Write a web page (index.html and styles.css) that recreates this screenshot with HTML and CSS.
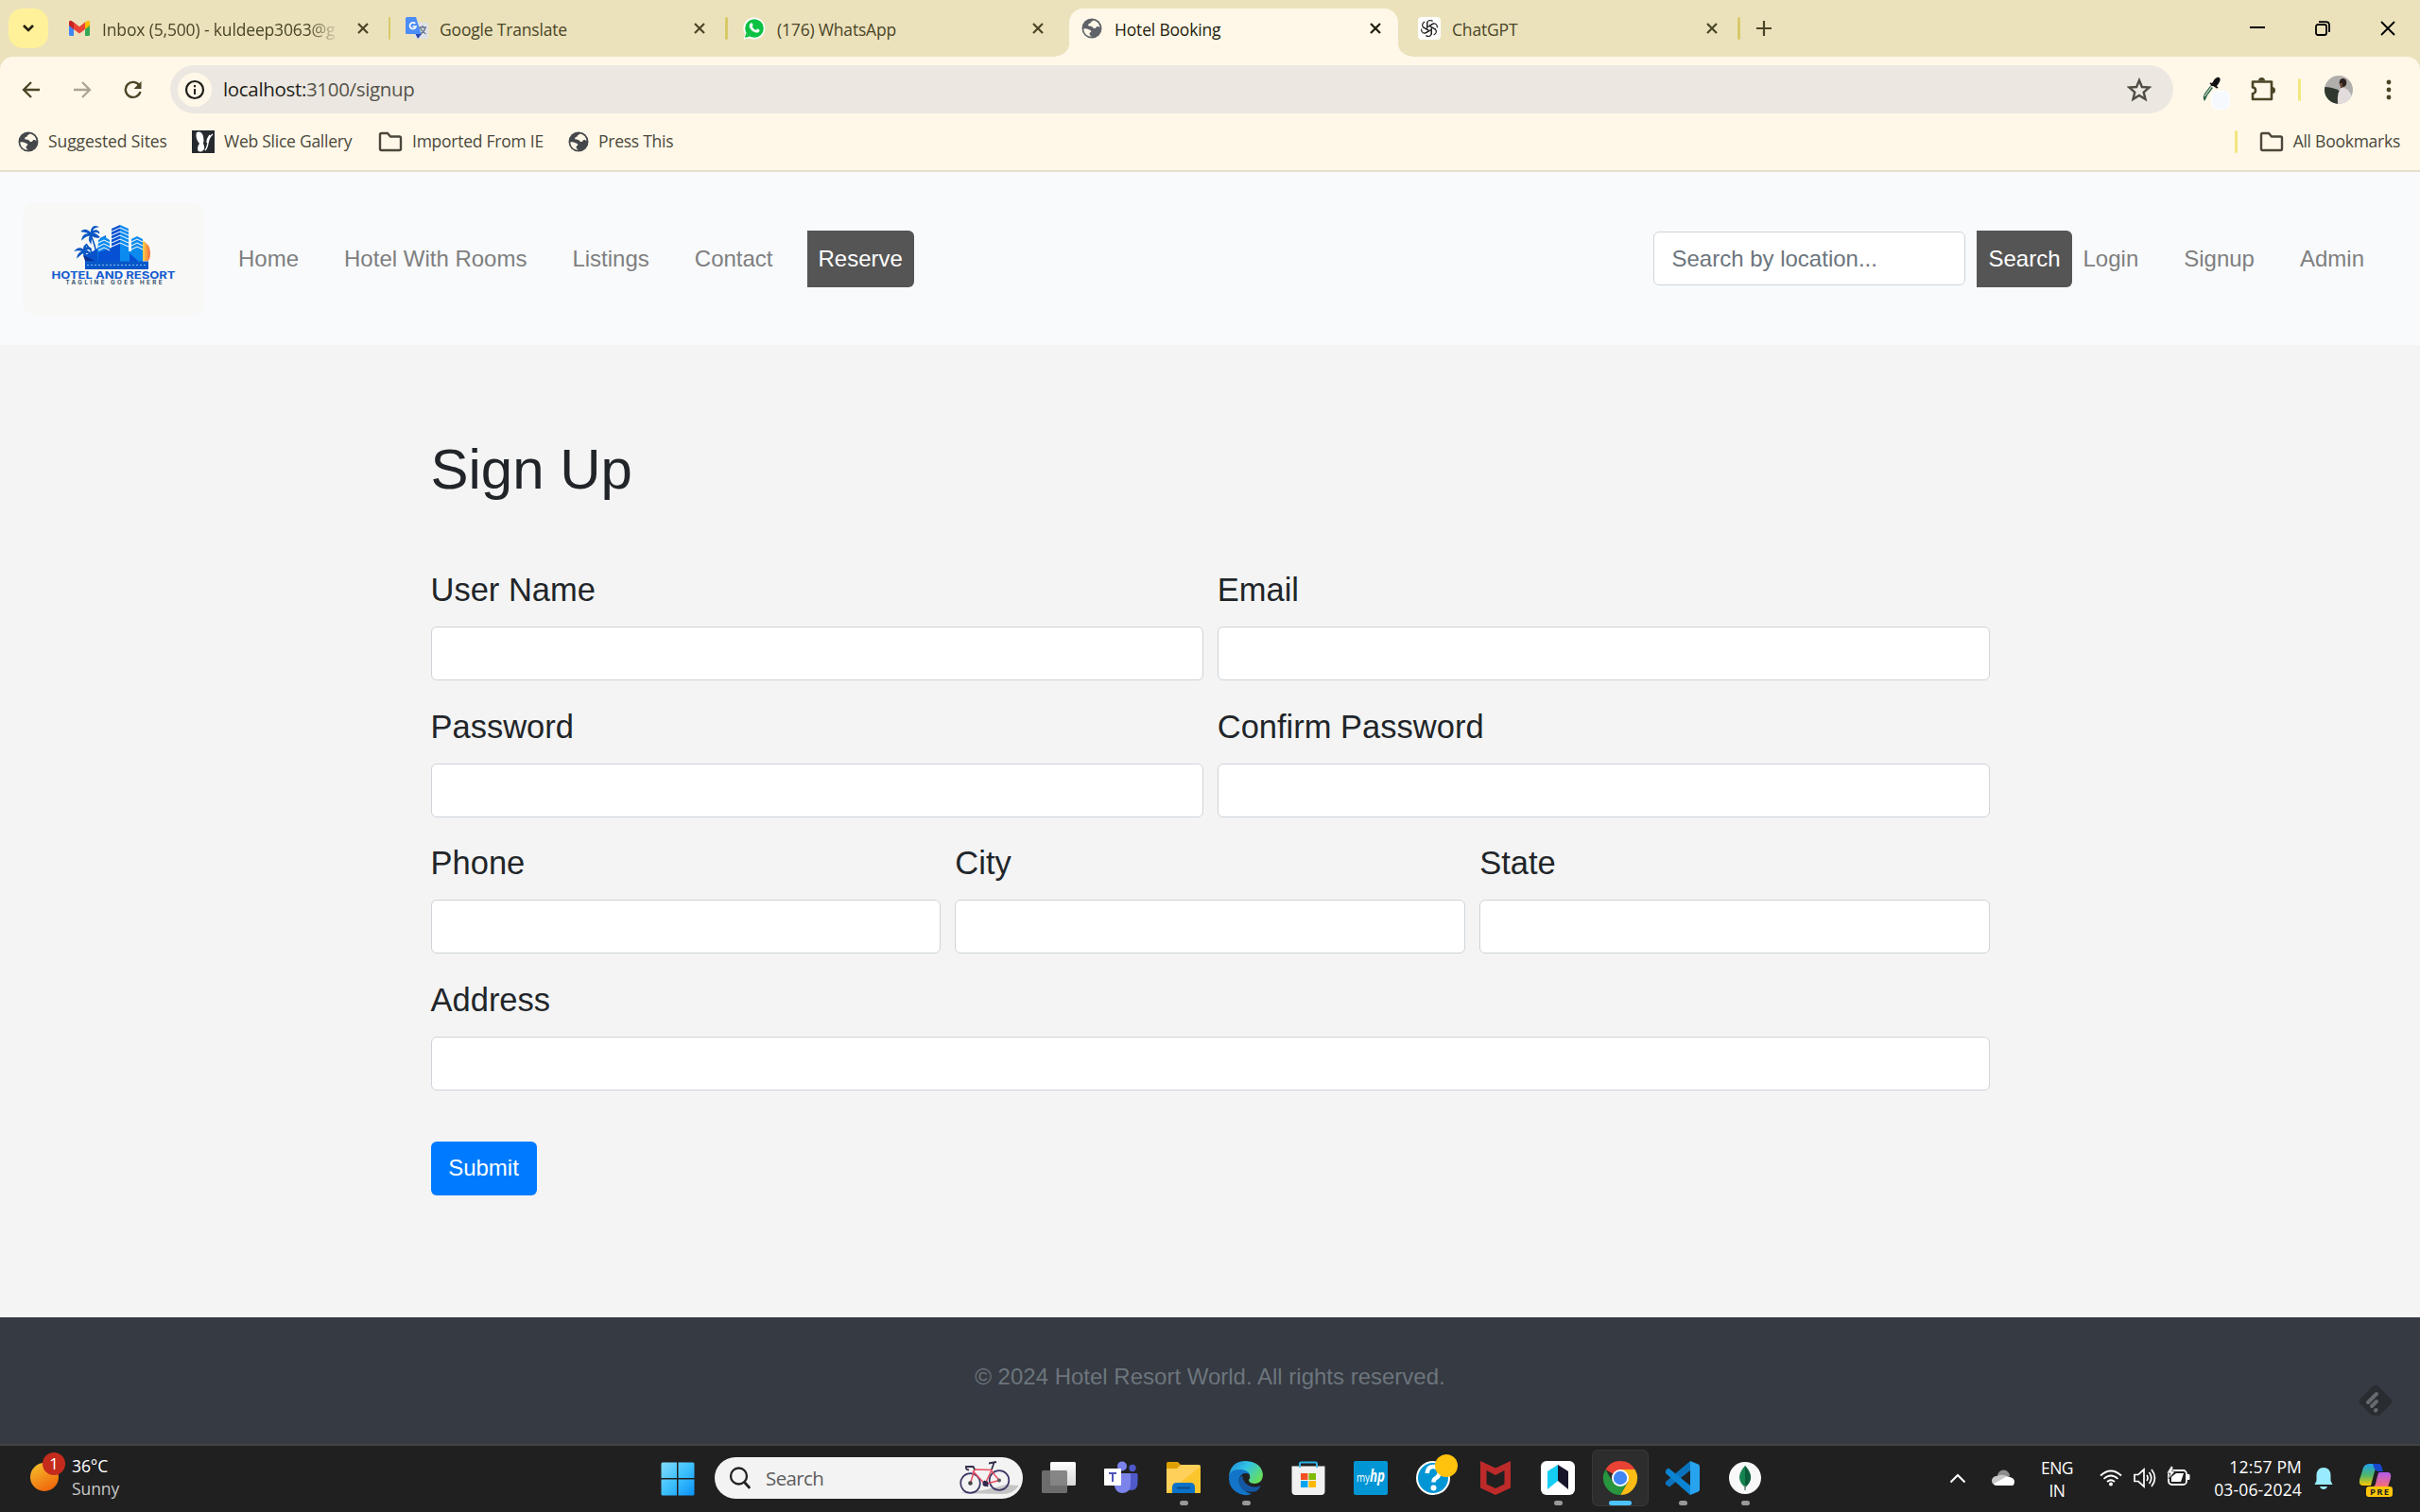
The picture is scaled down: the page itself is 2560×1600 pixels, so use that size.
FILE: index.html
```html
<!DOCTYPE html>
<html lang="en">
<head>
<meta charset="utf-8">
<title>Hotel Booking</title>
<link rel="stylesheet" href="styles.css">
</head>
<body>
<svg class="defs" width="0" height="0">
  <symbol id="x" viewBox="0 0 14 14"><path d="M2 2l10 10M12 2L2 12" stroke="currentColor" stroke-width="2.200" fill="none"/></symbol>
  <symbol id="globe" viewBox="0 0 22 22"><circle cx="11" cy="11" r="10.500" fill="currentColor"/><path d="M13 2.500c-1 1-3 1-3.300 2.600-.3 1.400-2.400.6-2.500 2.400 0 1.600 2.200 1.300 3.500 1.400 1.700.2 1.300 2 2.700 2.200 2.600.2 1.800-2 3.600-2.100 1.200 0 2 .6 2.400 1.500A8.700 8.700 0 0 0 13 2.500zM2.300 11.500c1.700-.2 3.700-.3 5 .6 1.200.9 2.700.7 3 2 .2 1.300-1.800 1.300-1.800 2.700 0 1.200 1 2 2.500 2.800C6 19.900 2.300 16 2.300 11.500z" fill="#fff8e9"/></symbol>
  <symbol id="folder" viewBox="0 0 26 22"><path d="M2 3.500Q2 2 3.500 2H10l3 3.500h9.500Q24 5.500 24 7v11.500Q24 20 22.500 20h-19Q2 20 2 18.500z" fill="none" stroke="currentColor" stroke-width="2.400"/></symbol>
</svg>

<header class="browser">
  <div class="tabstrip">
    <button class="tab-search"><svg width="14" height="10" viewBox="0 0 14 10"><path d="M2 2l5 5 5-5" fill="none" stroke="#22200f" stroke-width="2.600"/></svg></button>
    <div class="tab">
      <svg class="fav" viewBox="0 0 24 24"><path d="M1 6v12.500Q1 20 2.500 20H6V9z" fill="#4285f4"/><path d="M23 6v12.500q0 1.500-1.500 1.500H18V9z" fill="#34a853"/><path d="M18 5.500l2-1.300Q23 3 23 6v3l-5 4z" fill="#fbbc04"/><path d="M1 9V6q0-3 3-1.800l2 1.500V13z" fill="#c5221f"/><path d="M6 5.500l6 4.700 6-4.700V13l-6 4.500L6 13z" fill="#ea4335"/></svg>
      <span class="title long">Inbox (5,500) - kuldeep3063@g</span><svg class="close"><use href="#x"/></svg><i></i>
    </div>
    <div class="tab">
      <svg class="fav" viewBox="0 0 24 24"><rect x="9" y="6" width="15" height="17" rx="1.500" fill="#dfe2e8"/><path d="M14 11h8M18 9v2M21 11c-1 4-3 6-6 7M15.500 12c1 2 3 4 6 6" stroke="#67758b" stroke-width="1.400" fill="none"/><path d="M10.500 18H17l-4 5z" fill="#3046b0"/><path d="M1.500 0H11l5.500 18h-15Q0 18 0 16.500v-15Q0 0 1.500 0z" fill="#4c8df6"/><path d="M10.300 7A3.300 3.300 0 1 0 11 10H7.500" fill="none" stroke="#fff" stroke-width="1.700"/></svg>
      <span class="title">Google Translate</span><svg class="close"><use href="#x"/></svg><i></i>
    </div>
    <div class="tab">
      <svg class="fav" viewBox="0 0 24 24"><path d="M12 .5a11.500 11.500 0 1 1-5.500 21.700L.5 23.800l1.700-5.600A11.500 11.500 0 0 1 12 .5z" fill="#fff"/><circle cx="12" cy="12" r="9.800" fill="#0cc143"/><path d="M2 22l1.200-5 4 3.600z" fill="#0cc143"/><path d="M8.300 6.500c1-.8 1.700.3 2.200 1.900.3.900-1 1.400-.6 2 .8 1.500 2 2.700 3.600 3.300.7.200 1.200-1.500 2-1.200 2.200 1 2.500 1.200 1.800 2.500-1 1.800-3 2-5 1-3-1.200-4.800-3.500-5.500-5.500-.5-1.800.3-3.200 1.500-4z" fill="#fff"/></svg>
      <span class="title">(176) WhatsApp</span><svg class="close"><use href="#x"/></svg>
    </div>
    <div class="tab active">
      <svg class="fav g"><use href="#globe"/></svg>
      <span class="title">Hotel Booking</span><svg class="close"><use href="#x"/></svg>
    </div>
    <div class="tab">
      <svg class="fav" viewBox="0 0 24 24"><rect width="24" height="24" rx="4" fill="#fff"/><g fill="none" stroke="#222" stroke-width="1.200"><path id="pt" d="M9.700 13.300V7.200q0-3.500 3.200-3.700 1.700 0 2.700 1M12 9.400l4.600-2.700"/><use href="#pt" transform="rotate(60 12 12)"/><use href="#pt" transform="rotate(120 12 12)"/><use href="#pt" transform="rotate(180 12 12)"/><use href="#pt" transform="rotate(240 12 12)"/><use href="#pt" transform="rotate(300 12 12)"/></g></svg>
      <span class="title">ChatGPT</span><svg class="close"><use href="#x"/></svg><i></i>
    </div>
    <svg class="plus" width="18" height="18" viewBox="0 0 18 18"><path d="M9 1v16M1 9h16" stroke="#4a4526" stroke-width="2.200"/></svg>
    <div class="winctl">
      <svg width="16" height="16"><path d="M0 7h16" stroke="#000" stroke-width="2"/></svg>
      <svg width="16" height="16" viewBox="0 0 16 16"><rect x="1" y="4" width="11" height="11" rx="2" fill="none" stroke="#000" stroke-width="1.800"/><path d="M4 1.200h7.500q3.500 0 3.500 3.500V12" fill="none" stroke="#000" stroke-width="1.800"/></svg>
      <svg width="16" height="16" viewBox="0 0 16 16"><path d="M1 1l14 14M15 1L1 15" stroke="#000" stroke-width="1.800"/></svg>
    </div>
  </div>
  <div class="toolbar">
    <div class="navbtns">
      <svg width="20" height="20" viewBox="0 0 20 20"><path d="M19 10H2.500M10 2l-8 8 8 8" fill="none" stroke="#4a4526" stroke-width="2.300"/></svg>
      <svg width="20" height="20" viewBox="0 0 20 20"><path d="M1 10h16.500M10 2l8 8-8 8" fill="none" stroke="#a9a592" stroke-width="2.300"/></svg>
      <svg width="20" height="20" viewBox="0 0 20 20"><path d="M17.500 12A8 8 0 1 1 16.500 5.500" fill="none" stroke="#4a4526" stroke-width="2.400"/><path d="M18.500 1v8h-8z" fill="#4a4526"/></svg>
    </div>
    <div class="omnibox">
      <span class="info"><svg width="22" height="22" viewBox="0 0 22 22"><circle cx="11" cy="11" r="9" fill="none" stroke="#1f1e1a" stroke-width="2.200"/><path d="M11 10v6M11 6v2.200" stroke="#1f1e1a" stroke-width="2"/></svg></span>
      <span class="url"><b>localhost:</b>3100/signup</span>
      <svg class="star" width="26" height="26" viewBox="0 0 26 26"><path d="M13 3l2.900 7 7.600.6-5.800 5 1.800 7.400-6.500-4-6.500 4 1.800-7.400-5.800-5 7.600-.6z" fill="none" stroke="#4f4c42" stroke-width="2.400"/></svg>
    </div>
    <div class="ext">
      <svg width="30" height="36" viewBox="0 0 30 36"><path d="M2 25q-1-3 1-6l6-8 3 2-6 8q-1 3-3 6z" fill="#2c6245"/><path d="M3 22l8-11" stroke="#d6ded4" stroke-width="1.200"/><path d="M9 8l8 5M11 10l3.500-5.500q3-3 4-1t-3.500 7z" fill="#111" stroke="#111" stroke-width="2"/><rect x="10.500" y="16.500" width="19" height="19" rx="5" fill="#f6f9fd" stroke="#fff"/></svg>
      <svg width="26" height="27" viewBox="0 0 26 27"><path d="M2 5.500h20v18.500H2v-6c4 0 4-6.500 0-6.500z" fill="none" stroke="#4a4526" stroke-width="2.600" stroke-linejoin="round"/><path d="M8 4.500a3.500 3.500 0 0 1 7 0zM22.500 11a3.500 3.500 0 0 1 0 7z" fill="#4a4526"/></svg>
      <i></i>
      <svg width="30" height="30" viewBox="0 0 30 30"><clipPath id="av"><circle cx="15" cy="15" r="15"/></clipPath><g clip-path="url(#av)"><rect width="30" height="30" fill="#b1afab"/><path d="M0 12q8 0 16 4v14H0z" fill="#30372e"/><path d="M14 30q-1-14 4-17 7-1 11 9v8z" fill="#e2dcdc"/><ellipse cx="19.500" cy="7.500" rx="3.800" ry="4.500" fill="#2b211d"/><path d="M16 8h3v5h-2z" fill="#6f4a39"/></g></svg>
      <svg width="6" height="24" viewBox="0 0 6 24"><g fill="#4a4526"><circle cx="3" cy="4" r="2.400"/><circle cx="3" cy="12" r="2.400"/><circle cx="3" cy="20" r="2.400"/></g></svg>
    </div>
  </div>
  <div class="bookmarks">
    <a class="b1"><svg width="22" height="22"><use href="#globe"/></svg><span>Suggested Sites</span></a>
    <a class="b2"><svg width="24" height="24" viewBox="0 0 24 24"><rect width="24" height="24" fill="#262a2e"/><path d="M5 2q5-2 7 4 1 5 0 8 3 5-1 8-5 2-5-3 0-3 2-5-5-6-3-12z" fill="#fff"/><path d="M22 4q-4 3-5 9t-3 8M19 5q-3 4-3 8" stroke="#fff" stroke-width="1.500" fill="none"/></svg><span>Web Slice Gallery</span></a>
    <a class="b3"><svg width="26" height="22"><use href="#folder"/></svg><span>Imported From IE</span></a>
    <a class="b4"><svg width="22" height="22"><use href="#globe"/></svg><span>Press This</span></a>
    <i></i>
    <a class="b5"><svg width="26" height="22"><use href="#folder"/></svg><span>All Bookmarks</span></a>
  </div>
</header>

<nav class="navbar">
  <svg class="logo" width="192" height="120" viewBox="0 0 192 120">
    <defs><linearGradient id="sun" x1="0" x2="1"><stop offset="0" stop-color="#ffe04a"/><stop offset="1" stop-color="#f5683c"/></linearGradient></defs>
    <rect width="192" height="120" rx="15" fill="#f8f8f6"/>
    <path d="M126 40q9 4 9 14 0 5-2 8h-7z" fill="url(#sun)"/>
    <path d="M66 66V56l8-4 8-5V38l6-3v17h6V28l9-4v42z" fill="#0650d3"/>
    <path d="M103 24l9 4v24h3V39l6-3 6 3v27h-24z" fill="#0b8bef"/>
    <path d="M80 40l6-4 6 4v13l-8 9h-5z" fill="#0b8bef"/><path d="M80 62V53l14-5h9v18H80z" fill="#0650d3"/><path d="M113 54l9 8V66h-9z" fill="#0650d3"/>
    <path d="M80 43l6-3 6 3M80 47l6-3 6 3M80 51l6-3 6 3M94 31l9-4 9 4M94 35l9-4 9 4M94 39l9-4 9 4M94 43l9-4 9 4M94 47l9-4 9 4M115 42l6-3 6 3M115 46l6-3 6 3M115 50l6-3 6 3" fill="none" stroke="#e9f1f6" stroke-width="1.100"/>
    <path d="M79 61q-2-16-7-26M77 62q-3-9-10-18" fill="none" stroke="#0a56c4" stroke-width="1.600"/>
    <path d="M72 33q-5-6-10-2 5-1 9 3-7-1-8 5 4-4 9-4-3 4 0 8 0-5 1-8 4 3 8 2-3-4-8-4 6-3 8 0-1-5-8-2 1-4 6-5-6-2-7 7zM65 51q-5-4-9 0 5-1 8 1-5 1-6 6 4-4 7-5-1 4 2 7 0-5-1-7 4 0 6 3 0-4-6-5 4-3 7-1-3-4-7-1 0-3 2-4-4 0-3 6z" fill="#0a56c4" stroke="#0a56c4" stroke-width="1.200"/>
    <path d="M64 56l12 6H66z" fill="#0b2f8f"/>
    <rect x="66" y="62.500" width="67" height="8.500" fill="#0757c8"/><path d="M68 66.500h63" stroke="#86bdf3" stroke-width="1" stroke-dasharray="2 2"/>
    <text x="30.500" y="80.500" textLength="131" lengthAdjust="spacingAndGlyphs" class="logo-name">HOTEL AND RESORT</text>
    <text x="45.500" y="87" textLength="102" class="logo-tag">TAGLINE GOES HERE</text>
  </svg>
  <a class="first">Home</a><a>Hotel With Rooms</a><a>Listings</a><a>Contact</a>
  <button class="dark reserve">Reserve</button>
  <input class="control search" placeholder="Search by location...">
  <button class="dark">Search</button>
  <a class="login">Login</a><a>Signup</a><a>Admin</a>
</nav>

<main class="page">
  <form class="signup">
    <h1>Sign Up</h1>
    <div class="row"><label>User Name<input class="control"></label><label>Email<input class="control"></label></div>
    <div class="row"><label>Password<input class="control"></label><label>Confirm Password<input class="control"></label></div>
    <div class="row"><label>Phone<input class="control"></label><label>City<input class="control"></label><label>State<input class="control"></label></div>
    <div class="row"><label>Address<input class="control"></label></div>
    <button class="submit" type="button">Submit</button>
  </form>
</main>

<footer class="footer">© 2024 Hotel Resort World. All rights reserved.
  <svg class="feedly" width="36" height="33" viewBox="0 0 36 33"><path d="M15 2q3-3 6 0l13.500 13.500q2 2 0 4.500L23 32q-1 1-2.500 1h-5q-1.500 0-2.500-1L1.500 20q-2-2.500 0-4.500z" fill="#292c31"/><path d="M10 19l9-9M14 23l5-5M18 27.500l.5-.5" stroke="#66696e" stroke-width="4" stroke-linecap="round"/></svg>
</footer>

<div class="taskbar">
  <div class="weather">
    <svg width="40" height="44" viewBox="0 0 40 44"><defs><linearGradient id="w" x1=".2" y1="0" x2=".7" y2="1"><stop offset="0" stop-color="#f5bd2c"/><stop offset="1" stop-color="#f0640a"/></linearGradient></defs><circle cx="16" cy="27" r="15" fill="url(#w)"/><circle cx="26" cy="13" r="12" fill="#c42b1c"/><text x="26" y="19" text-anchor="middle" class="badge">1</text></svg>
    <div><p>36°C</p><p class="dim">Sunny</p></div>
  </div>
  <svg class="start" width="36" height="36" viewBox="0 0 36 36"><defs><linearGradient id="wl" gradientUnits="userSpaceOnUse" x1="0" y1="0" x2="36" y2="36"><stop offset="0" stop-color="#85dcfb"/><stop offset=".5" stop-color="#3dc0fd"/><stop offset="1" stop-color="#0a91f7"/></linearGradient></defs><path d="M2 .5h15v16.500H.5V2Q.5.500 2 .5zM18.500.5H34q1.500 0 1.500 1.500v15h-17zM.5 18.500H17v17H2Q.5 35.500.5 34zM18.500 18.500h17V34q0 1.500-1.500 1.500H18.500z" fill="url(#wl)"/></svg>
  <div class="tsearch">
    <svg width="24" height="24" viewBox="0 0 24 24"><circle cx="10.500" cy="10" r="8.500" fill="none" stroke="#222" stroke-width="2.300"/><path d="M16.500 16.500l5 5.500" stroke="#222" stroke-width="2.800" stroke-linecap="round"/></svg>
    <span>Search</span>
    <svg width="64" height="36" viewBox="0 0 64 36"><path d="M0 34q28-2 50-9l14 1q-6 9-18 9z" fill="#c6c5c6"/><g fill="none" stroke="#3b3665" stroke-width="1.700"><circle cx="12.500" cy="23.500" r="10.300"/><circle cx="43" cy="20.500" r="10.300"/></g><path d="M12.500 23.500L17 9l18 .5-7 15-13-14M28 24.500l15-4-9-11" fill="none" stroke="#ea5062" stroke-width="1.500"/><path d="M35 9l2.500-7M32 2.500l8-1.500M17 9l-1.500-3H8q-1 3 3 3.500M27 21l4 6" fill="none" stroke="#342d49" stroke-width="1.800"/><circle cx="28.500" cy="24" r="3" fill="#34284d"/><circle cx="12.500" cy="23.500" r="2.300" fill="#444"/><circle cx="43" cy="20.500" r="2" fill="#555"/></svg>
  </div>
  <div class="apps">
    <span><svg viewBox="0 0 36 36"><defs><linearGradient id="tv" x2="0" y2="1"><stop offset="0" stop-color="#fff"/><stop offset="1" stop-color="#d7d7d7"/></linearGradient></defs><rect x="9" y="1" width="27" height="25" rx="1.500" fill="url(#tv)"/><rect x="0" y="10" width="27" height="24" rx="1.500" fill="#777" fill-opacity=".88"/></svg></span>
    <span><svg viewBox="0 0 36 36"><circle cx="19" cy="5.500" r="5" fill="#7b83eb"/><circle cx="30" cy="7.500" r="3.700" fill="#5059c9"/><path d="M24 13h10.500q1 0 1 1v9q0 7-6 8h-6z" fill="#5059c9"/><path d="M11 13h17v13q-1 8-9 8-6 0-8-7z" fill="#7b83eb"/><rect y="8" width="18" height="18" rx="1" fill="#fff"/><path d="M5 13h8M9 13v9" stroke="#4b53bc" stroke-width="2"/></svg></span>
    <span class="run"><svg viewBox="0 0 36 36"><path d="M0 2.500Q0 1 1.500 1H12l3 3-2 4H0z" fill="#dea000"/><path d="M0 8h11l4-4h19q2 0 2 2v28H0z" fill="#ffd05a"/><path d="M0 34L36 6v28z" fill="#fdc52c"/><path d="M6 34v-6q0-5 5-5h14q5 0 5 5v6z" fill="#0a72c9"/><path d="M11 28.500h14" stroke="#0b4b88" stroke-width="2"/></svg></span>
    <span class="run"><svg viewBox="0 0 36 36"><defs><linearGradient id="e1" x2="1" y2=".6"><stop offset="0" stop-color="#1b86d7"/><stop offset=".5" stop-color="#33c4e5"/><stop offset="1" stop-color="#65dd60"/></linearGradient></defs><path d="M0 16Q2 0 18 0q16 1 18 14 0 9-8 10-7 0-7-4 2-2 1-5-2-5-9-5Q4 10 0 16z" fill="url(#e1)"/><path d="M0 18Q0 9 11 9q8 0 11 5-8-3-11 4-2 6 4 12 4 4 9 5-9 3-16-2Q0 28 0 18z" fill="#1375ca"/><path d="M14 15q-5 4-3 10 4 10 18 7 3-2 5-6-7 3-13 0-6-3-7-11z" fill="#1458a4"/></svg></span>
    <span><svg viewBox="0 0 36 36"><path d="M9 8V3q0-1.500 1.500-1.500h15Q27 1.500 27 3v5" fill="none" stroke="#2fb2e8" stroke-width="2"/><path d="M.5 5.500h35V32q0 4-4 4h-27q-4 0-4-4z" fill="#f1f1f1"/><path d="M9 7V5.500M27 7V5.500" stroke="#2fb2e8" stroke-width="2"/><path fill="#f25022" d="M10 13h7.500v7H10z"/><path fill="#7fba00" d="M18.500 13H26v7h-7.500z"/><path fill="#00a4ef" d="M10 21h7.500v7H10z"/><path fill="#ffb900" d="M18.500 21H26v7h-7.500z"/></svg></span>
    <span><svg viewBox="0 0 36 36"><rect width="36" height="36" rx="2" fill="#0096d6"/><text x="3" y="22" textLength="14" lengthAdjust="spacingAndGlyphs" class="my">my</text><text x="17" y="22" textLength="16" lengthAdjust="spacingAndGlyphs" class="hp">hp</text></svg></span>
    <span><svg viewBox="0 0 36 36"><circle cx="18" cy="18" r="17" fill="#0096d6" stroke="#fff" stroke-width="2"/><path d="M11.500 13q1-8 8-7 7 2 5 8-1 3-4 4.500-2 1-2 4" fill="none" stroke="#fff" stroke-width="4.500"/><circle cx="18.500" cy="28.500" r="3" fill="#fff"/><circle cx="32" cy="5" r="12" fill="#ffc20d"/></svg></span>
    <span><svg viewBox="0 0 36 36"><path d="M2 0l16 7.500L34 0v28.500L18 36 2 28.500zM8.500 10v14.500l9.500 4.500 9.500-4.500V10L18 15z" fill="#bd2a2a" fill-rule="evenodd"/></svg></span>
    <span class="run"><svg viewBox="0 0 36 36"><rect width="36" height="36" rx="6" fill="#fff"/><path d="M7 11l11-7v17L7 30z" fill="#15cef4"/><path d="M18 4l11 7v19l-11-9z" fill="#17152a"/></svg></span>
    <span class="run on"><svg viewBox="0 0 36 36"><path d="M18 18L2.400 9A18 18 0 0 1 33.600 9H18z" fill="#ea4335"/><path d="M18 9h15.600A18 18 0 0 1 18 36l7.800-13.500z" fill="#fbbc15"/><path d="M2.400 9A18 18 0 0 0 18 36l7.800-13.500L18 27l-7.800-4.500z" fill="#27963f"/><circle cx="18" cy="18" r="9" fill="#fff"/><circle cx="18" cy="18" r="7.200" fill="#4285f4"/></svg></span>
    <span class="run"><svg viewBox="0 0 36 36"><path d="M26 0v10L4 27.500 0 25v-3z" fill="#0b73bd"/><path d="M26 36L0 13v-3l3-2.500L26 26z" fill="#0a84d2"/><path d="M26 0l8.500 3.500q1.500.7 1.500 2.500v24q0 1.800-1.500 2.500L26 36z" fill="#27a3ef"/></svg></span>
    <span class="run"><svg viewBox="0 0 36 36"><circle cx="18" cy="18" r="17" fill="#f8f8f8"/><path d="M18 5q12 13 0 23Q6 18 18 5z" fill="#15834f"/><path d="M18 5q12 13 0 23z" fill="#0c5c3c"/><path d="M18 26v5" stroke="#6b8b76" stroke-width="1.500"/></svg></span>
  </div>
  <div class="tray">
    <svg class="chev" width="18" height="12" viewBox="0 0 18 12"><path d="M1.500 10.500L9 3l7.500 7.500" fill="none" stroke="#fff" stroke-width="2"/></svg>
    <svg class="cloud" width="24" height="18" viewBox="0 0 24 18"><path d="M6 7a6.500 6.500 0 0 1 13 0z" fill="#8d8d8d"/><path d="M5 17a5 5 0 0 1 0-10q8-3 12 1l6 3v6z" fill="#c8c8c8"/><path d="M2 15l11-6q3-3 6-1 5 1 5 5 0 4-4 4H5q-2 0-3-2z" fill="#fff"/></svg>
    <div class="lang"><p>ENG</p><p>IN</p></div>
    <svg class="wifi" width="24" height="18" viewBox="0 0 24 18"><g fill="none" stroke="#fff" stroke-width="1.700"><path d="M1 6.500q11-10 22 0M4.500 10q7.500-7 15 0M8 13q4-3.500 8 0"/></g><circle cx="12" cy="15.500" r="2" fill="#fff"/></svg>
    <svg class="vol" width="24" height="22" viewBox="0 0 24 22"><g fill="none" stroke="#fff" stroke-width="1.700"><path d="M1 7.500h4L11 2v18l-6-5.500H1zM14 8q2 3 0 6M16.500 5q4.500 6 0 12M19 2q7 9 0 18"/></g></svg>
    <svg class="bat" width="26" height="22" viewBox="0 0 26 22"><rect x="2" y="5" width="19" height="15" rx="3.500" fill="none" stroke="#fff" stroke-width="1.800"/><path d="M5 17V12l5-4h8l-3 9z" fill="#fff"/><path d="M22 9.500h2v5h-2z" fill="#fff" stroke="#fff"/><path d="M5 0L0 8h4l-2 6 7-8H5.500L7 2z" fill="#fff" stroke="#202020" stroke-width=".6"/></svg>
    <div class="clock"><p>12:57 PM</p><p>03-06-2024</p></div>
    <svg class="bell" width="20" height="24" viewBox="0 0 20 24"><path d="M10 1q7 0 7.500 8v6l2 4H.5l2-4V9Q3 1 10 1zM6 21h8q-1 3-4 3t-4-3z" fill="#99ebff"/></svg>
    <svg class="pilot" width="36" height="36" viewBox="0 0 36 36"><defs><linearGradient id="c1" x2="0" y2="1"><stop offset="0" stop-color="#1fa1ee"/><stop offset=".55" stop-color="#53b766"/><stop offset="1" stop-color="#ffc800"/></linearGradient><linearGradient id="c2" x2="0" y2="1"><stop offset="0" stop-color="#b05bee"/><stop offset="1" stop-color="#fb7069"/></linearGradient></defs><path d="M12 1h8l-3 8-4 15H5q-5 0-4-6L5 5q2-4 7-4z" fill="url(#c1)"/><path d="M15 1h6q3 0 4 5l1 3h-5q-4 0-6-8z" fill="#1647cd"/><path d="M22 10h9q4 0 3 6l-3 10H13q4 0 5-4l2-8q1-4 2-4z" fill="url(#c2)"/><rect x="8" y="25" width="28" height="11" rx="3" fill="#ffc708"/><text x="12" y="34" textLength="20" class="pre">PRE</text></svg>
  </div>
</div>
</body>
</html>
```
FILE: styles.css
```css
* { box-sizing: border-box; }
body { margin: 0; width: 2560px; height: 1600px; overflow: hidden; background: #f4f4f4; font-family: "Liberation Sans", Arial, sans-serif; font-size: 24px; color: #212529; display: flex; flex-direction: column; }
.defs { position: absolute; }
svg { display: block; flex: none; }
button { border: 0; font: inherit; padding: 0; }
p { margin: 0; }
i { display: block; }

/* browser frame */
.browser { font-family: "Open Sans", "Noto Sans", sans-serif; font-size: 17.500px; letter-spacing: -.18px; background: #ebe2bc; color: #4a4526; height: 182px; white-space: nowrap; flex: none; }
.tabstrip { height: 60px; display: flex; padding-left: 9px; }
.tab-search { width: 42px; height: 42px; margin: 9px 9px 0 0; border-radius: 15px; background: #fff19a; display: grid; place-items: center; }
.tab { width: 357px; height: 60px; padding: 0 4px 0 12px; display: flex; align-items: center; position: relative; }
.fav { width: 24px; height: 24px; margin-right: 12px; }
.fav.g { width: 22px; height: 22px; margin: 0 13px 0 1px; color: #5f6368; }
.title { flex: 1; overflow: hidden; line-height: 30px; padding-top: 2px; }
.title.long { -webkit-mask-image: linear-gradient(90deg, #000 87%, transparent); mask-image: linear-gradient(90deg, #000 87%, transparent); flex: none; width: 251px; margin-right: 18px; letter-spacing: -.15px; }
.close { width: 14px; height: 14px; margin-right: 22px; }
.tab i { width: 3px; height: 24px; border-radius: 2px; background: #d8c968; margin-left: -2px; }
.tab.active { width: 348px; margin-right: 9px; margin-top: 9px; height: 51px; padding-bottom: 9px; padding-right: 0; background: #fff8e9; border-radius: 15px 15px 0 0; color: #1f1c0c; }
.tab.active .close { margin-right: 17px; }
.tab.active::before, .tab.active::after { content: ""; position: absolute; bottom: 0; width: 14px; height: 15px; }
.tab.active::before { left: -14px; background: radial-gradient(circle at 0 0, transparent 14px, #fff8e9 14.500px); }
.tab.active::after { right: -14px; background: radial-gradient(circle at 100% 0, transparent 14px, #fff8e9 14.500px); }
.plus { margin: 21px 0 0 12px; }
.winctl { display: flex; gap: 53px; margin: 22px 26px 0 auto; }
.toolbar { height: 69px; background: #fff8e9; border-radius: 14px 14px 0 0; padding-top: 9px; display: flex; }
.navbtns { width: 180px; height: 51px; padding-left: 23px; display: flex; gap: 34px; align-items: center; }
.omnibox { width: 2119px; height: 51px; border-radius: 26px; background: #ece8e1; display: flex; align-items: center; padding: 0 23px 0 8px; }
.info { width: 36px; height: 36px; border-radius: 50%; background: #fff8e9; display: grid; place-items: center; margin-right: 12px; }
.url { flex: 1; font-size: 20.500px; letter-spacing: -.33px; color: #55524a; padding-bottom: 1px; }
.url b { font-weight: 400; color: #1f1e1a; }
.ext { display: flex; align-items: center; height: 51px; padding-left: 30px; }
.ext svg:first-child { margin-right: 22px; margin-top: 6px; }
.ext i { width: 3px; height: 24px; border-radius: 2px; background: #f3e77f; margin: 0 25px 0 24px; }
.ext svg:last-child { margin-left: 35px; }
.bookmarks { height: 53px; background: #fff8e9; border-bottom: 2px solid #e8dfca; display: flex; align-items: center; padding: 0 21px 9px 19px; color: #4b483b; letter-spacing: -.25px; }
.bookmarks a { display: flex; align-items: center; gap: 10px; }
.bookmarks svg { color: #45484b; }
.bookmarks span { display: block; padding-bottom: 2px; }
.b1 { width: 184px; letter-spacing: -.1px; }
.b2 { width: 197px; }
.b3 { width: 201px; }
.b3 svg, .b5 svg { color: #4b483b; }
.bookmarks i { width: 3px; height: 24px; border-radius: 2px; background: #f3e77f; margin: 0 23px 0 auto; }

/* site navigation */
.navbar { height: 183px; flex: none; background: #f8fafc; display: flex; align-items: center; padding-left: 24px; white-space: nowrap; }
.navbar a { color: #7f7f7f; margin-left: 48px; }
.navbar a.first { margin-left: 36px; }
.navbar a.login { margin-left: 12px; }
.logo-name { font: 700 11px Inter, sans-serif; fill: #1259cf; }
.logo-tag { font: 700 6.200px Inter, sans-serif; fill: #36506b; }
.dark { height: 60px; padding: 0 12px; background: #555; color: #fff; border-radius: 0 6px 6px 0; }
.dark.reserve { margin-left: 36px; margin-right: auto; }
.control { display: block; width: 100%; height: 57px; border: 1.500px solid #ced4da; border-radius: 6px; background: #fff; padding: 0 18px; font: 24px "Liberation Sans", Arial, sans-serif; color: #495057; }
.control::placeholder { color: #6c757d; opacity: 1; }
.control.search { width: 330px; margin-right: 12px; }
.navbar a:last-child { margin-right: 59px; }

/* sign-up form */
.page { height: 1029px; flex: none; padding: 96px 455px 0; }
h1 { font-size: 60px; font-weight: 400; line-height: 72px; margin: 0 0 65px; }
.signup { padding-left: .5px; }
.row { display: flex; gap: 15px; margin-bottom: 22.600px; }
.row label { flex: 1 1 0; font-size: 34.500px; line-height: 53px; }
.row .control { margin-top: 12px; }
.submit { display: block; margin-top: 54px; width: 112px; height: 57px; border-radius: 6px; background: #007bff; color: #fff; }
.footer { height: 134px; flex: none; background: #363a42; color: #6c757d; text-align: center; line-height: 28px; padding-top: 49px; position: relative; }
.feedly { position: absolute; left: 2495px; top: 71px; }

/* taskbar */
.taskbar { height: 72px; flex: none; background: #202020; border-top: 2px solid #424242; display: flex; font-family: "Open Sans", "Noto Sans", sans-serif; font-size: 17.500px; color: #fff; white-space: nowrap; }
.weather { width: 699px; padding: 6px 0 0 31px; display: flex; gap: 5px; }
.weather p { line-height: 24px; letter-spacing: -.1px; }
.weather div { padding-top: 3px; }
.dim { color: #c9c9c9; }
.badge { font: 17px "Open Sans", sans-serif; fill: #fff; }
.start { margin-top: 17px; }
.tsearch { width: 326px; height: 44px; margin: 12px 0 0 21px; border-radius: 22px; background: #f3f3f3; color: #5d5d5d; display: flex; align-items: center; padding: 0 0 0 15px; font-size: 20.500px; }
.tsearch span { margin-left: 15px; letter-spacing: -.6px; width: 204px; }
.apps { display: flex; padding: 4px 0 0 8px; }
.apps span { width: 60px; height: 60px; margin-right: 6px; padding: 12px; position: relative; border-radius: 7px; }
.apps svg { width: 36px; height: 36px; overflow: visible; }
.run::after { content: ""; position: absolute; left: 25.500px; bottom: 1px; width: 9px; height: 5px; border-radius: 3px; background: #999; }
.on { background: #2d2d2d; box-shadow: inset 0 0 0 1px #383838; }
.run.on::after { left: 18px; width: 24px; background: #4cc2ff; }
.my { font: 13px "Open Sans", sans-serif; fill: #fff; }
.hp { font: italic 700 17px "Open Sans", sans-serif; fill: #fff; }
.tray { display: flex; margin-left: auto; padding: 25px 29px 0 0; }
.chev { margin: 3px 27px 0 0; }
.cloud { margin-right: 26px; }
.tray p { line-height: 24px; }
.lang { width: 38px; text-align: center; margin: -14px 26px 0 0; letter-spacing: -.5px; }
.wifi { margin-right: 12px; }
.vol { margin: -2px 12px 0 0; }
.bat { margin: -4px 1px 0 -1px; }
.clock { width: 116px; text-align: right; margin-top: -15px; letter-spacing: .15px; }
.bell { margin: -3px 27px 0 13px; }
.pilot { margin-top: -7px; }
.pre { font: 700 9.500px "Open Sans", sans-serif; fill: #222; }
```
